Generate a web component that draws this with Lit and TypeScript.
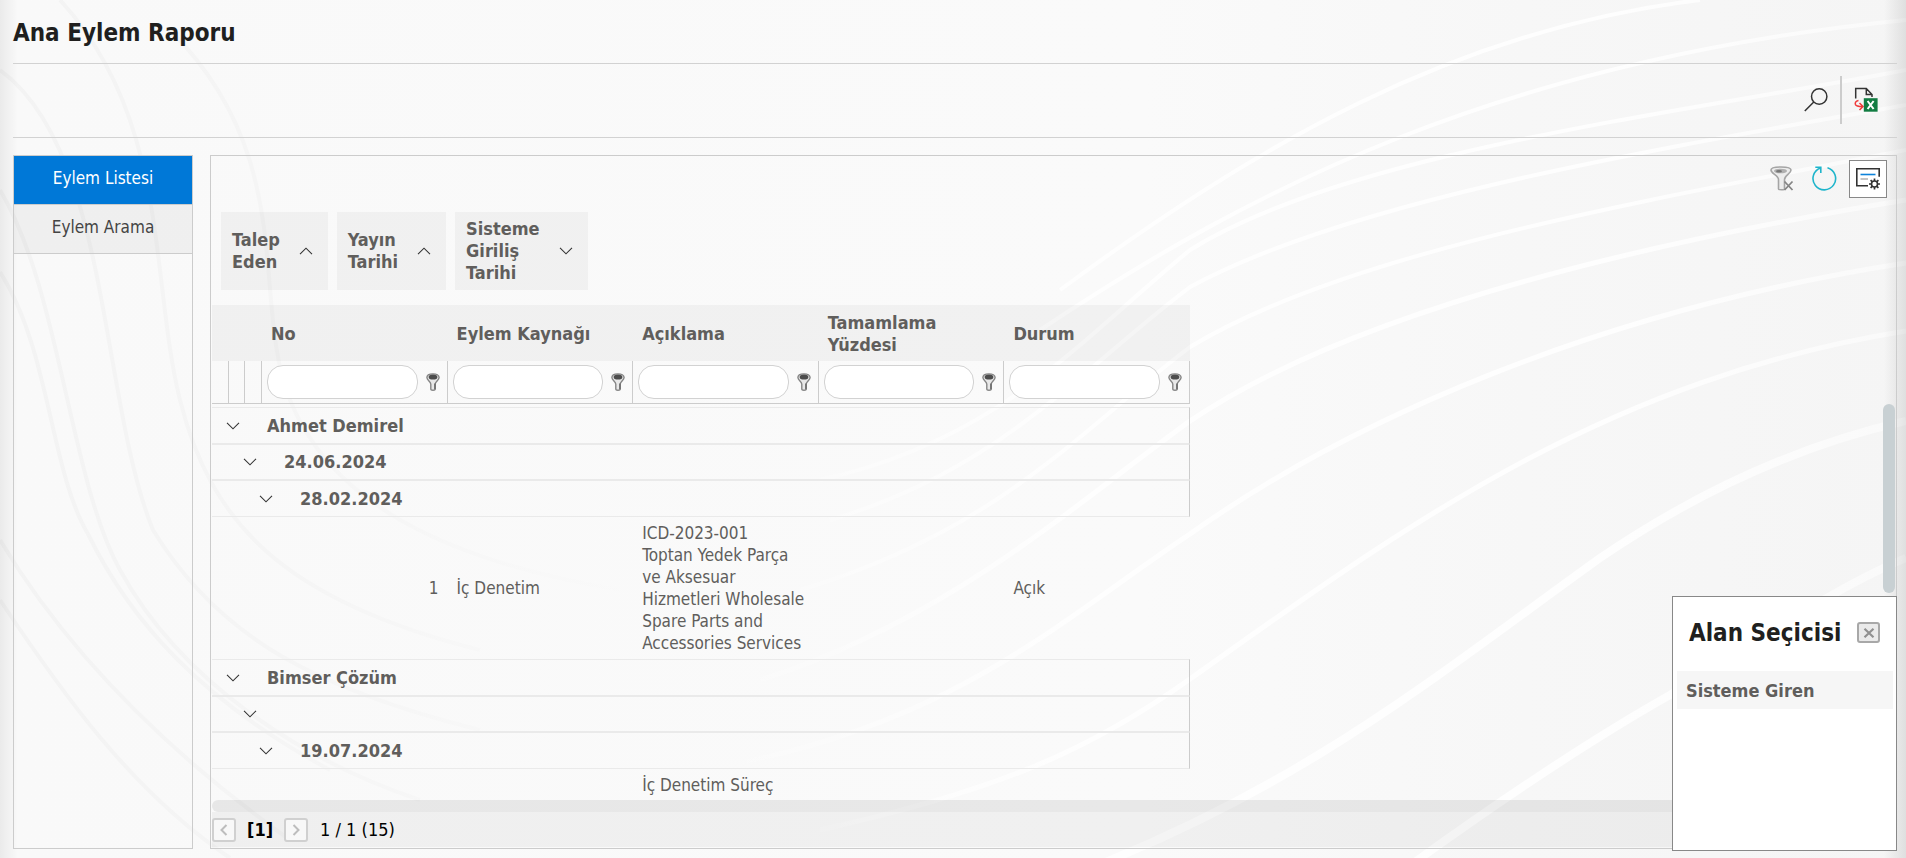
import { LitElement, html, css } from "lit";
import { customElement } from "lit/decorators.js";

type GroupRow = { kind: "group"; level: number; text: string };
type DataRow = { kind: "data"; cells: string[] };

const chips = [
  { lines: ["Talep", "Eden"], dir: "up" },
  { lines: ["Yayın", "Tarihi"], dir: "up" },
  { lines: ["Sisteme", "Giriliş", "Tarihi"], dir: "down" },
];

const columns = ["No", "Eylem Kaynağı", "Açıklama", "Tamamlama Yüzdesi", "Durum"];

const rows: (GroupRow | DataRow)[] = [
  { kind: "group", level: 1, text: "Ahmet Demirel" },
  { kind: "group", level: 2, text: "24.06.2024" },
  { kind: "group", level: 3, text: "28.02.2024" },
  {
    kind: "data",
    cells: [
      "1",
      "İç Denetim",
      "ICD-2023-001\nToptan Yedek Parça\nve Aksesuar\nHizmetleri Wholesale\nSpare Parts and\nAccessories Services",
      "",
      "Açık",
    ],
  },
  { kind: "group", level: 1, text: "Bimser Çözüm" },
  { kind: "group", level: 2, text: "" },
  { kind: "group", level: 3, text: "19.07.2024" },
  { kind: "data", cells: ["", "", "İç Denetim Süreç", "", ""] },
];

const chevron = (dir: string) => html`<svg class="chev" viewBox="0 0 14 8" aria-hidden="true">
  <path d=${dir === "up" ? "M1 7.2 7 1.2 13 7.2" : "M1 .8 7 6.8 13 .8"} fill="none" stroke="#333" stroke-width="1.1" />
</svg>`;

const funnelIcon = html`<svg class="funnel" viewBox="0 0 14 18" aria-hidden="true">
  <path d="M.9 4.600C.9 2 3.500.9 7 .9s6.100 1.100 6.100 3.700c0 2.700-3.900 4.200-3.900 6.600v4.800c0 .8-.8 1.200-2.200 1.200s-2.200-.4-2.200-1.200v-4.800C4.800 8.800.9 7.300.9 4.600z" fill="#e8e8e8" stroke="#858585" stroke-width="1.4" />
  <ellipse cx="7" cy="4" rx="4.400" ry="2.600" fill="#4c4c4c" />
  <path d="M8.900 10.500v5.800" stroke="#5c5c5c" stroke-width="1.2" />
</svg>`;

const searchIcon = html`<svg width="24" height="24" viewBox="0 0 24 24" aria-hidden="true">
  <g fill="none" stroke="#333" stroke-width="1.5"><circle cx="15.2" cy="8.5" r="7.7" /><path d="M9.800 14 .8 23" /></g>
</svg>`;

const excelIcon = html`<svg width="24" height="25" viewBox="0 0 24 25" aria-hidden="true">
  <path d="M1.700 11.500V1.500h10.600l5.700 6v2.500M12.300 1.500v6H18" fill="none" stroke="#333" stroke-width="1.5" />
  <path d="M4.500 13.500C1.500 14 .8 16 1.500 17.600 2.200 19 4 19.500 8 19.500M5.500 16l3.500 3.500L5.500 23" fill="none" stroke="#f03a3a" stroke-width="1.5" />
  <rect x="9.8" y="11.2" width="13.8" height="13.5" fill="#127c42" />
  <path d="M13.600 14l6 8M19.600 14l-6 8" stroke="#fff" stroke-width="2" />
</svg>`;

const clearFilterIcon = html`<svg width="24" height="25" viewBox="0 0 24 25" aria-hidden="true">
  <path d="M1 4C1 1.800 5 1 11 1s10 .8 10 3c0 3.800-6.500 5-6.500 9.500V23c0 1-6 1-6 0v-9.500C8.500 9 1 7.800 1 4z" fill="#ededed" stroke="#a5a5a5" stroke-width="1.6" />
  <ellipse cx="10.5" cy="5" rx="6.5" ry="2.3" fill="#b0b0b0" />
  <ellipse cx="9" cy="5.3" rx="3" ry="1.3" fill="#777" />
  <path d="M14.500 15.500l8 8.500M22.500 15.500l-8 8.500" stroke="#858585" stroke-width="1.8" />
</svg>`;

const refreshIcon = html`<svg width="25" height="25" viewBox="0 0 25 25" aria-hidden="true">
  <g fill="none" stroke="#1fb5cb" stroke-width="1.6"><path d="M15.500 1.700A11.300 11.300 0 1 1 8.500 1.900" /><path d="M3.300 1.300h5.500V7" /></g>
</svg>`;

const chooserIcon = html`<svg width="24" height="22" viewBox="0 0 24 22" aria-hidden="true">
  <path d="M12 17.800H.8V.8h22.400v8" fill="none" stroke="#333" stroke-width="1.6" />
  <path d="M4.500 6.500h15" stroke="#0d82da" stroke-width="1.6" />
  <path d="M4.500 11h7.500" stroke="#b5b5b5" stroke-width="1.6" />
  <circle cx="18.5" cy="16" r="3" fill="none" stroke="#333" stroke-width="1.6" />
  <path d="M18.500 13v-2.500M18.500 19v2.500M15.500 16H13M21.500 16H24M16.400 13.900l-1.800-1.800M20.600 13.900l1.800-1.800M16.400 18.100l-1.800 1.800M20.600 18.100l1.800 1.800" stroke="#333" stroke-width="1.7" />
</svg>`;

const pageArrow = (dir: string) => html`<svg width="8" height="12" viewBox="0 0 8 12" aria-hidden="true">
  <path d=${dir === "prev" ? "M6.500 1 1.500 6l5 5" : "M1.500 1l5 5-5 5"} fill="none" stroke="#bdbdbd" stroke-width="2" />
</svg>`;

const backdrop = html`<svg class="backdrop" viewBox="0 0 1906 858" preserveAspectRatio="none" aria-hidden="true">
  <defs>
    <linearGradient id="tone" x1="0" y1="0" x2="1" y2="0">
      <stop offset="0" stop-color="#f9f9f9" /><stop offset=".6" stop-color="#fafafa" />
      <stop offset=".8" stop-color="#f7f7f7" /><stop offset="1" stop-color="#f5f5f5" />
    </linearGradient>
    <linearGradient id="light" gradientUnits="userSpaceOnUse" x1="700" y1="0" x2="1906" y2="0">
      <stop offset="0" stop-color="#fff" stop-opacity="0" /><stop offset=".35" stop-color="#fff" stop-opacity=".9" />
      <stop offset=".75" stop-color="#fff" stop-opacity=".9" /><stop offset="1" stop-color="#fff" stop-opacity=".5" />
    </linearGradient>
    <linearGradient id="shade" gradientUnits="userSpaceOnUse" x1="0" y1="0" x2="640" y2="0">
      <stop offset="0" stop-color="#f3f3f3" /><stop offset=".4" stop-color="#f5f5f5" /><stop offset="1" stop-color="#f5f5f5" stop-opacity="0" />
    </linearGradient>
    <linearGradient id="edgeL" x1="0" y1="0" x2="1" y2="0">
      <stop offset="0" stop-color="#000" stop-opacity=".06" /><stop offset="1" stop-color="#000" stop-opacity="0" />
    </linearGradient>
    <linearGradient id="edgeR" x1="0" y1="0" x2="1" y2="0">
      <stop offset="0" stop-color="#000" stop-opacity="0" /><stop offset="1" stop-color="#000" stop-opacity=".09" />
    </linearGradient>
  </defs>
  <rect width="1906" height="858" fill="url(#tone)" />
  <g fill="none" stroke="url(#shade)" stroke-width="4">
    <path d="M0 272C50 350 50 470 88 534C130 620 200 700 330 770" />
    <path d="M0 190C60 290 70 480 120 570C180 680 300 760 420 800" />
    <path d="M0 70C110 150 100 400 153 530C220 640 320 690 480 730" />
    <path d="M60 0C170 120 150 280 180 400C210 520 280 600 480 650" />
    <path d="M170 30C300 160 250 300 290 400C330 500 440 560 620 590" />
    <path d="M0 600C60 690 130 790 230 858" />
    <path d="M0 540C60 640 150 740 290 840" />
  </g>
  <g fill="none" stroke="url(#light)">
    <g stroke-width="4">
      <path d="M820 480C1000 440 1080 340 1190 250C1350 150 1700 110 1906 70" />
      <path d="M830 520C1000 470 1080 370 1190 287C1350 200 1650 150 1906 105" />
      <path d="M800 590C1000 530 1080 430 1190 347C1350 250 1650 200 1906 150" />
      <path d="M1040 330C1250 190 1500 60 1906 20" />
      <path d="M1060 290C1250 150 1450 30 1700 0" />
    </g>
    <g stroke-width="5">
      <path d="M760 680C950 620 1080 500 1190 421C1340 320 1600 250 1906 200" />
      <path d="M700 770C950 730 1060 620 1190 534C1350 420 1600 310 1906 263" />
      <path d="M820 830C1000 790 1090 750 1190 679C1400 530 1600 380 1906 331" />
    </g>
    <g stroke-width="8">
      <path d="M1060 880C1300 790 1430 680 1600 558C1700 490 1800 445 1906 421" />
      <path d="M1390 880C1500 800 1590 740 1670 695C1760 640 1830 590 1906 558" />
    </g>
  </g>
  <rect width="18" height="858" fill="url(#edgeL)" />
  <rect x="1884" width="22" height="858" fill="url(#edgeR)" />
</svg>`;

@customElement("app-root")
export class AppRoot extends LitElement {
  static styles = css`
    :host { display: block; }
    * { box-sizing: border-box; }
    .page {
      position: relative; display: flex; flex-direction: column; height: 100vh; padding: 0 9px 9px 13px;
      font: 17px/22px "DejaVu Sans Condensed", "DejaVu Sans", sans-serif; color: #605e5c; overflow: hidden;
    }
    .backdrop { position: absolute; inset: 0; width: 100%; height: 100%; z-index: -1; }
    h1, h2 { margin: 0; font-size: 24px; line-height: 30px; font-weight: 700; color: #201f1e; }
    h1 { padding: 18px 0 15px; border-bottom: 1px solid #d2d2d2; }
    button { font: inherit; color: inherit; background: none; border: 0; padding: 0; margin: 0; display: inline-flex; align-items: center; justify-content: center; }
    svg { display: block; }
    .toolbar { display: flex; justify-content: flex-end; align-items: center; gap: 12px; height: 74px; padding: 0 19px 2px 0; border-bottom: 1px solid #d2d2d2; flex: none; }
    .sep { width: 2px; height: 48px; background: #ccc; }
    .body { display: flex; flex: 1; gap: 17px; padding-top: 17px; min-height: 0; }
    .side { width: 180px; flex: none; border: 1px solid #ccc; }
    .tab { width: 100%; height: 49px; padding-bottom: 4px; border-bottom: 1px solid #ccc; background: rgba(0, 0, 0, .04); color: #444; }
    .tab.on { background: #0078d7; color: #fff; }
    .panel { flex: 1; min-width: 0; border: 1px solid #ccc; display: flex; flex-direction: column; padding: 0 1px; }
    .tools { display: flex; justify-content: flex-end; align-items: center; gap: 18px; padding: 4px 8px 2px 0; height: 43px; }
    .chooser-btn { width: 38px; height: 38px; border: 1px solid #888; background: #fff; margin-left: -6px; }
    .chips { display: flex; gap: 9px; padding: 13px 9px 15px; }
    .chip { display: flex; align-items: center; gap: 19px; height: 78px; padding: 0 15px 0 11px; background: rgba(0, 0, 0, .035); font-size: 18px; font-weight: 700; text-align: left; }
    .chip span span { display: block; }
    .chev { width: 14px; height: 8px; }
    .grid { flex: 1; min-height: 0; display: flex; }
    .view { flex: 1; min-width: 0; overflow: hidden; }
    table { table-layout: fixed; width: 978px; border-collapse: separate; border-spacing: 0; }
    .c-ind { width: 16px; }
    .c-ind-w { width: 17px; }
    th, td { padding: 0; text-align: left; }
    .head th { height: 56px; padding: 2px 9px 0; background: rgba(0, 0, 0, .035); font-size: 18px; }
    .filter td { height: 43px; border-right: 1px solid #ccc; border-bottom: 1px solid #ccc; }
    .fcell { display: flex; align-items: center; gap: 8px; padding: 0 7px 0 5px; }
    .fcell input { flex: 1; min-width: 0; height: 34px; padding: 0 12px; border: 1px solid #d2d2d2; border-radius: 16px; background: #fff; font: inherit; outline: 0; }
    .funnel { width: 14px; height: 18px; }
    .gap td { height: 3px; }
    .group td { height: 37px; border-top: 1px solid #eaeaea; border-bottom: 1px solid #eaeaea; border-right: 1px solid #ccc; font-size: 18px; font-weight: 700; }
    .group.level2 td { height: 36px; }
    .gcell { display: flex; align-items: center; gap: 27px; }
    .l1 { padding-left: 14px; }
    .l2 { padding-left: 31px; }
    .l3 { padding-left: 47px; }
    .data td { padding: 5px 9px; white-space: pre-line; }
    .data td.num { text-align: right; }
    .vbar { width: 12px; flex: none; padding-top: 99px; }
    .thumb { height: 189px; border-radius: 6px; background: #c8d0d3; }
    .hbar { height: 12px; flex: none; border-radius: 6px; background: rgba(0, 0, 0, .07); }
    .pager { height: 35px; flex: none; margin-bottom: 1px; display: flex; align-items: center; background: rgba(0, 0, 0, .04); color: #000; font-size: 18px; padding-top: 1px; }
    .pager button { width: 24px; height: 24px; border: 2px solid #d0d0d0; border-radius: 3px; background: #f8f8f8; }
    .pager b { margin: 0 11px; }
    .pager .sum { margin-left: 12px; }
    .popup { position: absolute; right: 9px; bottom: 7px; width: 225px; height: 255px; border: 1px solid #888; background: #fff; padding: 0 3px 0 4px; }
    .phead { display: flex; align-items: center; justify-content: space-between; height: 74px; padding: 0 13px 3px 12px; }
    .close { width: 23px; height: 21px; border: 2px solid #a8a8a8; border-radius: 3px; background: #eaeaea; }
    .field { display: flex; width: 100%; height: 38px; padding: 1px 9px 0; background: #f6f6f6; font-size: 18px; font-weight: 700; justify-content: flex-start; }
  `;

  private row(r: GroupRow | DataRow) {
    if (r.kind === "group") {
      return html`<tr class="group level${r.level}"><td colspan="8"><div class="gcell l${r.level}">
        <button aria-label="Daralt">${chevron("down")}</button><span>${r.text}</span></div></td></tr>`;
    }
    return html`<tr class="data"><td></td><td></td><td></td>
      ${r.cells.map((c, i) => html`<td class=${i === 0 ? "num" : ""}>${c}</td>`)}</tr>`;
  }

  render() {
    return html`<div class="page">
      ${backdrop}
      <h1>Ana Eylem Raporu</h1>
      <div class="toolbar">
        <button aria-label="Ara">${searchIcon}</button>
        <span class="sep"></span>
        <button aria-label="Excel'e aktar">${excelIcon}</button>
      </div>
      <div class="body">
        <nav class="side">
          <button class="tab on">Eylem Listesi</button>
          <button class="tab">Eylem Arama</button>
        </nav>
        <main class="panel">
          <div class="tools">
            <button aria-label="Filtreyi temizle">${clearFilterIcon}</button>
            <button aria-label="Yenile">${refreshIcon}</button>
            <button class="chooser-btn" aria-label="Alan seçicisi">${chooserIcon}</button>
          </div>
          <div class="chips">
            ${chips.map((c) => html`<button class="chip"><span>${c.lines.map((l) => html`<span>${l}</span>`)}</span>${chevron(c.dir)}</button>`)}
          </div>
          <div class="grid">
            <div class="view">
              <table>
                <colgroup>
                  <col class="c-ind-w" /><col class="c-ind" /><col class="c-ind-w" />
                  ${columns.map(() => html`<col />`)}
                </colgroup>
                <thead>
                  <tr class="head"><th></th><th></th><th></th>${columns.map((c) => html`<th scope="col">${c}</th>`)}</tr>
                  <tr class="filter"><td></td><td></td><td></td>
                    ${columns.map((c) => html`<td><div class="fcell"><input type="text" aria-label=${c} /><button aria-label="${c} filtresi">${funnelIcon}</button></div></td>`)}
                  </tr>
                </thead>
                <tbody>
                  <tr class="gap" aria-hidden="true"><td colspan="8"></td></tr>
                  ${rows.map((r) => this.row(r))}
                </tbody>
              </table>
            </div>
            <div class="vbar"><div class="thumb"></div></div>
          </div>
          <div class="hbar"></div>
          <div class="pager">
            <button aria-label="Önceki sayfa">${pageArrow("prev")}</button>
            <b>[1]</b>
            <button aria-label="Sonraki sayfa">${pageArrow("next")}</button>
            <span class="sum">1 / 1 (15)</span>
          </div>
        </main>
      </div>
      <section class="popup" aria-label="Alan Seçicisi">
        <div class="phead"><h2>Alan Seçicisi</h2>
          <button class="close" aria-label="Kapat"><svg width="12" height="10" viewBox="0 0 12 10"><path d="M1.500.8l9 8.400M10.500.8l-9 8.400" stroke="#909090" stroke-width="2.2" /></svg></button>
        </div>
        <button class="field">Sisteme Giren</button>
      </section>
    </div>`;
  }
}
